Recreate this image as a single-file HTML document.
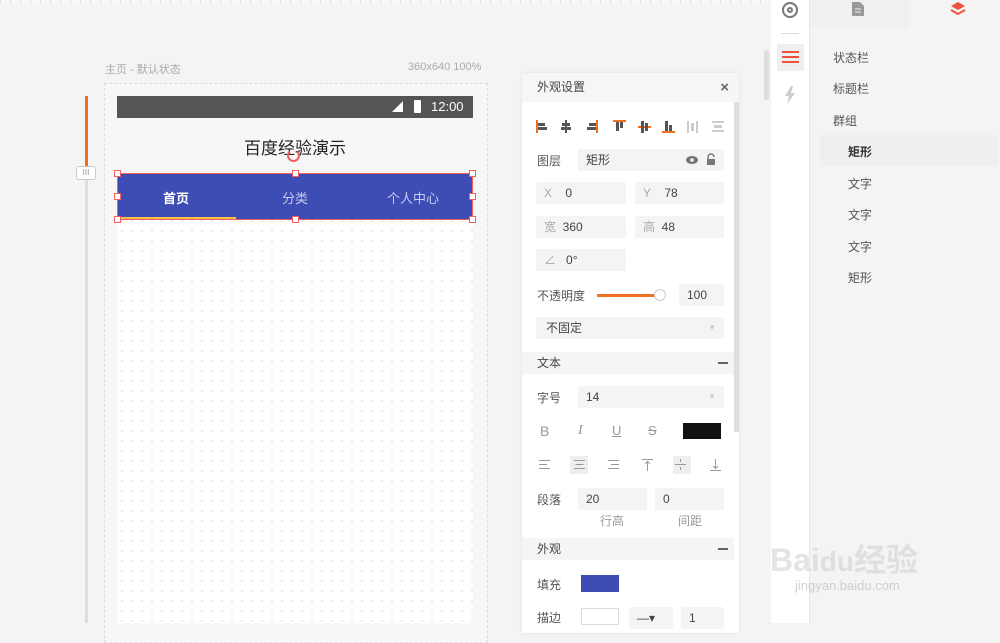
<!DOCTYPE html><html><head><meta charset="utf-8"><style>
*{margin:0;padding:0;box-sizing:border-box}
body{width:1000px;height:623px;overflow:hidden;background:#f4f4f4;font-family:"Liberation Sans","Noto Sans CJK SC",sans-serif;position:relative;font-size:12px;color:#555}
.a{position:absolute}
.in{position:absolute;background:#f3f4f5;border-radius:2px;color:#444;font-size:12px;line-height:22px;padding-left:8px}
.lab{position:absolute;font-size:12px;color:#555}
.sec{position:absolute;left:522px;width:212px;height:22px;background:#f4f5f6;font-size:12px;color:#444;line-height:22px;padding-left:15px}
.sec b{position:absolute;right:6px;top:10px;width:10px;height:2px;background:#666}
.h{position:absolute;width:7px;height:7px;border:1px solid #f06060;background:#fff}
.li{position:absolute;font-size:12px;color:#555}
</style></head><body>
<div class="a" style="left:0;top:0;width:770px;height:4px;background:repeating-linear-gradient(90deg,#e2e2e2 0 1px,#f8f8f8 1px 10px)"></div>
<div class="a" style="left:105px;top:61px;font-size:11px;color:#aaa">主页 - 默认状态</div>
<div class="a" style="left:408px;top:61px;font-size:11px;color:#aaa">360x640 100%</div>
<div class="a" style="left:104px;top:83px;width:384px;height:560px;border:1px dashed #ddd;background:#f7f7f7"></div>
<div class="a" style="left:85px;top:96px;width:3px;height:527px;background:#ddd"></div>
<div class="a" style="left:85px;top:96px;width:3px;height:70px;background:#f07020"></div>
<div class="a" style="left:76px;top:166px;width:20px;height:14px;background:#fff;border:1px solid #ccc;border-radius:3px;font-size:8px;color:#999;text-align:center;line-height:12px">III</div>
<div class="a" style="left:117px;top:96px;width:356px;height:527px;background-color:#fff;background-image:radial-gradient(#e4e4e4 1px,transparent 1px);background-size:10px 10px"></div>
<div class="a" style="left:117px;top:96px;width:356px;height:22px;background:#555"></div>
<div class="a" style="left:392px;top:101px;width:0;height:0;border-left:11px solid transparent;border-bottom:11px solid #fff"></div>
<div class="a" style="left:414px;top:100px;width:7px;height:13px;background:#fff;border-radius:1px"></div>
<div class="a" style="left:431px;top:99px;color:#fff;font-size:13px">12:00</div>
<div class="a" style="left:117px;top:118px;width:356px;height:55px;background:#f7f7f7"></div>
<div class="a" style="left:117px;top:134px;width:356px;text-align:center;font-size:17px;color:#222">百度经验演示</div>
<div class="a" style="left:287px;top:149px;width:13px;height:13px;border:2px solid #f06060;border-radius:50%;border-top-color:transparent"></div>
<div class="a" style="left:117px;top:173px;width:356px;height:47px;background:#3e4db3;border:1px solid #f06060"></div>
<div class="a" style="left:119px;top:217px;width:117px;height:2px;background:#f5c242"></div>
<div class="a" style="left:163px;top:188px;color:#fff;font-size:13px;font-weight:bold">首页</div>
<div class="a" style="left:282px;top:188px;color:#c8cbf0;font-size:13px">分类</div>
<div class="a" style="left:387px;top:188px;color:#c8cbf0;font-size:13px">个人中心</div>
<div class="h" style="left:114px;top:170px"></div><div class="h" style="left:292px;top:170px"></div><div class="h" style="left:469px;top:170px"></div>
<div class="h" style="left:114px;top:193px"></div><div class="h" style="left:469px;top:193px"></div>
<div class="h" style="left:114px;top:216px"></div><div class="h" style="left:292px;top:216px"></div><div class="h" style="left:469px;top:216px"></div>

<div class="a" style="left:522px;top:73px;width:217px;height:560px;background:#fff;box-shadow:0 0 4px rgba(0,0,0,.08)"></div>
<div class="a" style="left:522px;top:73px;width:217px;height:29px;background:#f5f6f7;line-height:29px;padding-left:15px;font-size:12px;color:#444">外观设置<span style="position:absolute;right:10px;font-size:15px;color:#666;font-weight:bold">×</span></div>
<div class="a" style="left:734px;top:102px;width:5px;height:330px;background:#ddd"></div>
<svg class="a" style="left:535px;top:119px" width="192" height="16" viewBox="0 0 192 16">
<g fill="#555"><rect x="1" y="1" width="2" height="13" fill="#f07020"/><rect x="3" y="4" width="7" height="3"/><rect x="3" y="8" width="9" height="3"/>
<rect x="30" y="1" width="2" height="13" fill="#555"/><rect x="27" y="4" width="8" height="3"/><rect x="26" y="8" width="10" height="3"/>
<rect x="61" y="1" width="2" height="13" fill="#f07020"/><rect x="54" y="4" width="7" height="3"/><rect x="52" y="8" width="9" height="3"/>
<rect x="78" y="1" width="13" height="2" fill="#f07020"/><rect x="81" y="3" width="3" height="9"/><rect x="85" y="3" width="3" height="6"/>
<rect x="103" y="7" width="13" height="2" fill="#f07020"/><rect x="106" y="2" width="3" height="12"/><rect x="110" y="4" width="3" height="8"/>
<rect x="127" y="12" width="13" height="2" fill="#f07020"/><rect x="130" y="2" width="3" height="10"/><rect x="134" y="6" width="3" height="6"/></g>
<g fill="#ccc"><rect x="152" y="2" width="2" height="12"/><rect x="156" y="4" width="3" height="8"/><rect x="161" y="2" width="2" height="12"/>
<rect x="177" y="2" width="12" height="2"/><rect x="179" y="6" width="8" height="3"/><rect x="177" y="11" width="12" height="2"/></g></svg>
<div class="lab" style="left:537px;top:152px">图层</div>
<div class="in" style="left:578px;top:149px;width:146px">矩形
<svg style="position:absolute;right:26px;top:6px" width="12" height="10"><ellipse cx="6" cy="5" rx="6" ry="4" fill="#777"/><circle cx="6" cy="5" r="1.8" fill="#f3f4f5"/></svg>
<svg style="position:absolute;right:8px;top:4px" width="10" height="12"><path d="M2 6V4a3 3 0 0 1 6 0" stroke="#777" stroke-width="1.5" fill="none"/><rect x="1" y="6" width="8" height="6" fill="#777"/></svg></div>
<div class="in" style="left:536px;top:182px;width:90px;color:#444"><span style="color:#aaa">X</span>&nbsp;&nbsp;&nbsp; 0</div>
<div class="in" style="left:635px;top:182px;width:89px"><span style="color:#aaa">Y</span>&nbsp;&nbsp;&nbsp; 78</div>
<div class="in" style="left:536px;top:216px;width:90px"><span style="color:#aaa">宽</span>&nbsp; 360</div>
<div class="in" style="left:635px;top:216px;width:89px"><span style="color:#aaa">高</span>&nbsp; 48</div>
<div class="in" style="left:536px;top:249px;width:90px"><span style="color:#aaa">∠</span>&nbsp;&nbsp; 0°</div>
<div class="lab" style="left:537px;top:287px">不透明度</div>
<div class="a" style="left:597px;top:294px;width:62px;height:3px;background:#f07020"></div>
<div class="a" style="left:654px;top:289px;width:12px;height:12px;border:1px solid #ccc;border-radius:50%;background:#fff"></div>
<div class="in" style="left:679px;top:284px;width:45px">100</div>
<div class="in" style="left:536px;top:317px;width:188px;padding-left:10px">不固定<span style="position:absolute;right:8px;color:#ccc;font-size:8px">▼</span></div>
<div class="sec" style="top:352px">文本<b></b></div>
<div class="lab" style="left:537px;top:389px">字号</div>
<div class="in" style="left:578px;top:386px;width:146px">14<span style="position:absolute;right:8px;color:#ccc;font-size:8px">▼</span></div>
<div class="a" style="left:540px;top:423px;font-size:14px;color:#999">B</div>
<div class="a" style="left:578px;top:423px;font-size:14px;color:#999;font-style:italic;font-family:'Liberation Serif'">I</div>
<div class="a" style="left:612px;top:423px;font-size:13px;color:#999;text-decoration:underline">U</div>
<div class="a" style="left:648px;top:423px;font-size:13px;color:#999;text-decoration:line-through">S</div>
<div class="a" style="left:683px;top:423px;width:38px;height:16px;background:#111"></div>
<div class="a" style="left:570px;top:456px;width:18px;height:18px;background:#eee"></div>
<div class="a" style="left:673px;top:456px;width:18px;height:18px;background:#eee"></div>
<svg class="a" style="left:538px;top:458px" width="186" height="14" viewBox="0 0 186 14"><g stroke="#999" stroke-width="1" fill="none">
<path d="M1 2.5h11M1 6.5h8M1 10.5h11"/><path d="M36 2.5h11M37.5 6.5h8M36 10.5h11"/><path d="M70 2.5h11M73 6.5h8M70 10.5h11"/>
<path d="M104 1.5h11M109.5 4v9M107 6l2.5-2.5L112 6"/><path d="M137 6.5h11M142.5 1v3M142.5 9v3"/><path d="M172 12.5h11M177.5 1v9M175 8l2.5 2.5L180 8"/></g></svg>
<div class="lab" style="left:537px;top:491px">段落</div>
<div class="in" style="left:578px;top:488px;width:69px">20</div>
<div class="in" style="left:655px;top:488px;width:69px">0</div>
<div class="lab" style="left:600px;top:512px;color:#999">行高</div>
<div class="lab" style="left:678px;top:512px;color:#999">间距</div>
<div class="sec" style="top:538px">外观<b></b></div>
<div class="lab" style="left:537px;top:576px">填充</div>
<div class="a" style="left:581px;top:575px;width:38px;height:17px;background:#3e4db3"></div>
<div class="lab" style="left:537px;top:609px">描边</div>
<div class="a" style="left:581px;top:608px;width:38px;height:17px;border:1px solid #ddd;background:#fff"></div>
<div class="in" style="left:629px;top:607px;width:44px">—▾</div>
<div class="in" style="left:681px;top:607px;width:43px">1</div>

<div class="a" style="left:764px;top:50px;width:5px;height:50px;background:#ddd;border-radius:2px"></div>
<div class="a" style="left:771px;top:0;width:39px;height:623px;background:#fff;border-right:1px solid #e6e6e6"></div>
<div class="a" style="left:782px;top:2px;width:16px;height:16px;border:2px solid #777;border-radius:50%"></div>
<div class="a" style="left:787px;top:7px;width:6px;height:6px;border:2px solid #777;border-radius:50%"></div>
<div class="a" style="left:781px;top:33px;width:18px;height:1px;background:#ddd"></div>
<div class="a" style="left:777px;top:44px;width:27px;height:27px;background:#efeff2"></div>
<div class="a" style="left:782px;top:51px;width:17px;height:2px;background:#f05040;box-shadow:0 5px 0 #f05040,0 10px 0 #f05040"></div>
<svg class="a" style="left:783px;top:86px" width="14" height="18"><path d="M8 0L2 10h4l-2 8 8-11H8l2-7z" fill="#ccc"/></svg>
<div class="a" style="left:810px;top:0;width:99px;height:28px;background:#f0f0f0"></div>
<svg class="a" style="left:852px;top:2px" width="12" height="14"><path d="M0 0h8l4 4v10H0z" fill="#999"/><path d="M3 7h6M3 10h6" stroke="#f0f0f0"/></svg>
<svg class="a" style="left:950px;top:1px" width="16" height="16"><path d="M8 1l7 4-7 4-7-4z" fill="#f05040"/><path d="M1 9l7 4 7-4" stroke="#f05040" stroke-width="2" fill="none"/></svg>
<div class="a" style="left:820px;top:135px;width:178px;height:31px;background:#efeff2"></div>
<div class="li" style="left:833px;top:49px">状态栏</div>
<div class="li" style="left:833px;top:80px">标题栏</div>
<div class="li" style="left:833px;top:112px">群组</div>
<div class="li" style="left:848px;top:143px;color:#333;font-weight:bold">矩形</div>
<div class="li" style="left:848px;top:175px">文字</div>
<div class="li" style="left:848px;top:206px">文字</div>
<div class="li" style="left:848px;top:238px">文字</div>
<div class="li" style="left:848px;top:269px">矩形</div>
<div class="a" style="left:770px;top:535px;font-size:32px;color:rgba(205,205,205,.55);font-weight:bold">Bai<span style="font-size:28px">du</span>经验</div>
<div class="a" style="left:795px;top:578px;font-size:13px;color:rgba(190,190,190,.7)">jingyan.baidu.com</div>
</body></html>
